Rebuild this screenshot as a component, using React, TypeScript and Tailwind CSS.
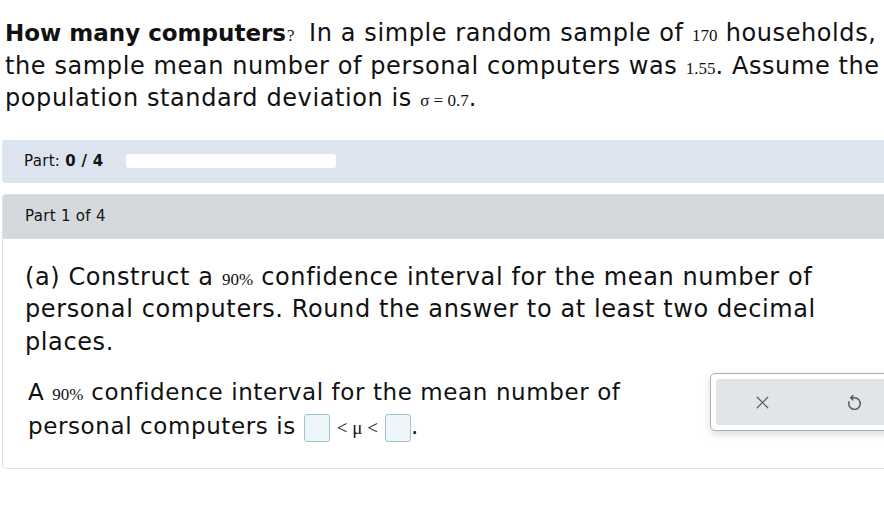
import { X } from "lucide-react";

const serif = "font-['Liberation_Serif',serif] tracking-normal";

const Num = ({ children }: { children: React.ReactNode }) => (
  <span className={`${serif} text-[17px] leading-none`}>{children}</span>
);

const AnswerBox = () => (
  <span className="inline-block h-[28px] w-[26px] rounded-[3px] border border-[#9fc2d4] bg-[#eef6fa] align-middle" />
);

const UndoIcon = () => (
  <svg width="17" height="19" viewBox="0 0 16 18" fill="none" stroke="#4d5e67" strokeWidth="1.4" strokeLinecap="round" strokeLinejoin="round">
    <path d="M6.5 2.5 L4.5 4.5 L6.5 6.5" />
    <path d="M4.5 4.5 H8 A5.5 5.5 0 1 1 2.8 8.2" />
  </svg>
);

export default function App() {
  return (
    <div className="h-[530px] w-[884px] overflow-hidden bg-white font-['DejaVu_Sans',Verdana,sans-serif] text-[#111]">
      <div className="w-[931px] px-[2px]">
        <p className="whitespace-nowrap px-[3px] pt-[17px] text-[24px] leading-[32.5px] tracking-[0.6px]">
          <b className="text-[23px] tracking-normal">How many computers</b>
          <span className={`${serif} ml-[1px] inline-block w-[22px] text-[17px] leading-none`}>?</span>
          In a simple random sample of <Num>170</Num> households,
          <br />
          the sample mean number of personal computers was <Num>1.55</Num>. Assume the
          <br />
          population standard deviation is <Num>σ = 0.7</Num>.
        </p>

        <div className="mt-[25px] flex h-[43px] items-center gap-[22px] rounded-t-[3px] rounded-b-[4px] bg-[#dce5ef] px-[22px] text-[15px] tracking-[0.3px]">
          <span>
            Part: <b>0 / 4</b>
          </span>
          <div className="h-[14px] w-[210px] rounded-[3px] bg-white" />
        </div>

        <div className="mt-[11px] rounded-[4px] border border-[#dfe2e4]">
          <div className="flex h-[44px] items-center bg-[#d3d9dd] px-[22px] text-[15px] tracking-[0.3px]">Part 1 of 4</div>
          <div className="px-[22px] pb-[25px] pt-[22px]">
            <p className="whitespace-nowrap text-[24px] leading-[32.5px] tracking-[0.6px]">
              (a) Construct a <Num>90%</Num> confidence interval for the mean number of
              <br />
              personal computers. Round the answer to at least two decimal
              <br />
              places.
            </p>
            <div className="mt-[17px] flex items-start justify-between">
              <p className="whitespace-nowrap pl-[3px] text-[23px] leading-[34px] tracking-[0.6px]">
                A <Num>90%</Num> confidence interval for the mean number of
                <br />
                personal computers is <AnswerBox />
                <span className={`${serif} mx-[7px] text-[19px] leading-none tracking-[2px]`}>&lt; μ &lt;</span>
                <AnswerBox />.
              </p>
              <div className="-mt-[2px] rounded-[5px] border border-[#a9b1b6] bg-white p-[5px] shadow-[0_3px_8px_rgba(0,0,0,0.15)]">
                <div className="flex h-[46px] w-[184px] items-center rounded-[3px] bg-[#e1e5e8]">
                  <div className="flex flex-1 justify-center">
                    <X size={21} strokeWidth={1.4} color="#4d5e67" />
                  </div>
                  <div className="flex flex-1 justify-center">
                    <UndoIcon />
                  </div>
                </div>
              </div>
            </div>
          </div>
        </div>
      </div>
    </div>
  );
}
